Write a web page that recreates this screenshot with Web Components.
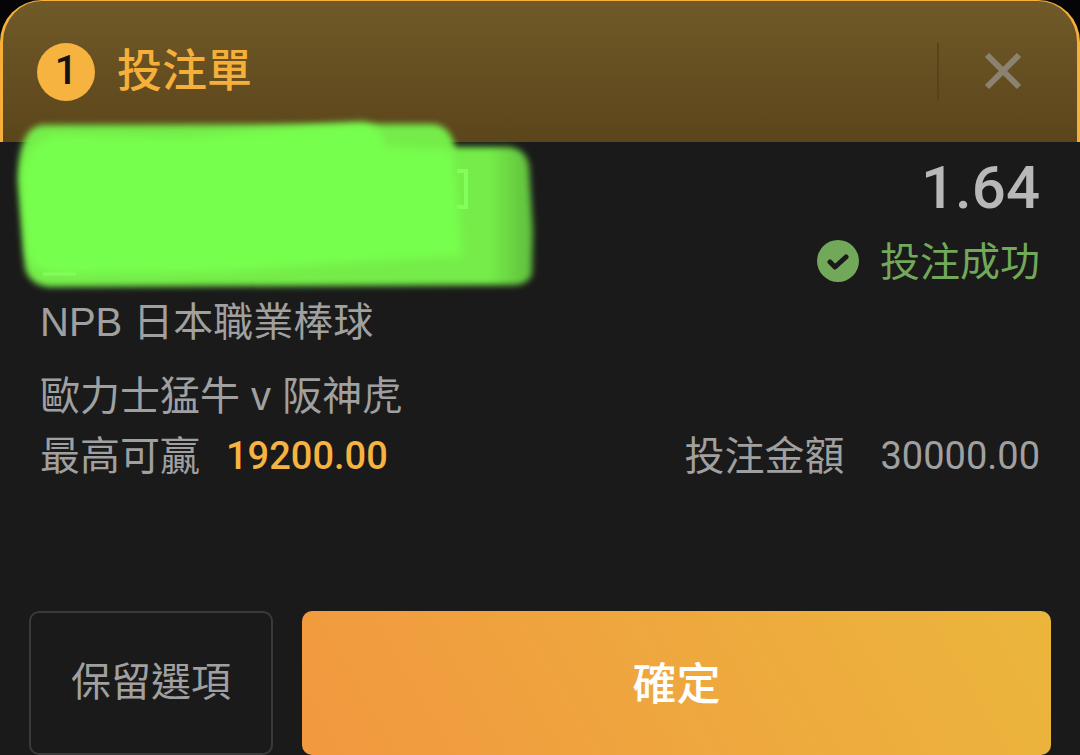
<!DOCTYPE html>
<html lang="zh-Hant">
<head>
<meta charset="utf-8">
<meta name="viewport" content="width=device-width, initial-scale=1">
<title>投注單</title>
<style>
  html, body {
    margin: 0;
    min-height: 100%;
    background: #050507;
  }
  body {
    font-family: "Liberation Sans", "Noto Sans CJK TC", sans-serif;
    color: #a0a0a0;
  }
</style>
</head>
<body>
<bet-slip>
  <slip-header slot="header" count="1">投注單</slip-header>
  <bet-item odds="1.64" status="投注成功">
    <span slot="league">NPB 日本職業棒球</span>
    <span slot="match">歐力士猛牛 v 阪神虎</span>
    <bet-amount slot="amounts" value="19200.00" highlight>最高可贏</bet-amount>
    <bet-amount slot="amounts" value="30000.00" wide>投注金額</bet-amount>
  </bet-item>
  <slip-button slot="actions">保留選項</slip-button>
  <slip-button slot="actions" primary>確定</slip-button>
</bet-slip>

<script>
function attach(el, html) {
  const template = document.createElement('template');
  template.innerHTML = html;
  el.attachShadow({ mode: 'open' }).appendChild(template.content.cloneNode(true));
}

class BetSlip extends HTMLElement {
  constructor() {
    super();
    attach(this, `
      <style>
        :host {
          display: flex;
          flex-direction: column;
          min-height: 100vh;
        }
        main {
          flex: 1;
          display: flex;
          flex-direction: column;
          justify-content: space-between;
          background: #1a1a1a;
        }
        footer {
          display: flex;
          gap: 29px;
          padding: 0 29px;
        }
      </style>
      <slot name="header"></slot>
      <main>
        <slot></slot>
        <footer><slot name="actions"></slot></footer>
      </main>
    `);
  }
}

class SlipHeader extends HTMLElement {
  constructor() {
    super();
    attach(this, `
      <style>
        :host { display: block; }
        header {
          display: flex;
          align-items: center;
          box-sizing: border-box;
          height: 142px;
          padding: 0 55px 0 34px;
          border: 3px solid #f6b03a;
          border-top-width: 1px;
          border-bottom: 0;
          border-radius: 42px 42px 0 0;
          background: linear-gradient(#705a28, #5b451b);
        }
        .count {
          display: flex;
          justify-content: center;
          width: 58px;
          height: 58px;
          border-radius: 50%;
          background: #f6b340;
          color: #141414;
          font: 500 40px/56px Roboto, sans-serif;
        }
        h1 {
          flex: 1;
          margin: 0 0 0 22px;
          color: #f6b03a;
          font: 500 45px/58px "Noto Sans CJK TC", sans-serif;
          padding-bottom: 8px;
        }
        button {
          display: flex;
          align-items: center;
          justify-content: flex-end;
          width: 85px;
          height: 58px;
          padding: 0;
          border: 0;
          border-left: 2px solid #57431c;
          background: none;
        }
      </style>
      <header>
        <span class="count"></span>
        <h1><slot></slot></h1>
        <button type="button" aria-label="關閉">
          <svg width="38" height="38" viewBox="0 0 38 38" stroke="#8b8272" stroke-width="6">
            <path d="M3 2L35 34M35 2L3 34"/>
          </svg>
        </button>
      </header>
    `);
  }

  connectedCallback() {
    this.shadowRoot.querySelector('.count').textContent = this.getAttribute('count') || '';
  }
}

class BetItem extends HTMLElement {
  constructor() {
    super();
    attach(this, `
      <style>
        :host {
          display: block;
          position: relative;
          padding: 8px 40px 0;
          font-size: 40px;
          line-height: 60px;
        }
        .result {
          display: flex;
          flex-direction: column;
          align-items: flex-end;
          gap: 6px;
        }
        .odds {
          color: #b8b8b8;
          font: 500 60px/76px Roboto, sans-serif;
        }
        .status {
          display: flex;
          align-items: center;
          gap: 20px;
          color: #72a85a;
        }
        .league { margin-bottom: 14px; }
        .amounts {
          display: flex;
          justify-content: space-between;
        }
        .marker {
          position: absolute;
          left: 0;
          top: -32px;
          pointer-events: none;
        }
      </style>
      <div class="result">
        <span class="odds"></span>
        <div class="status">
          <svg width="44" height="44" viewBox="0 0 44 44">
            <circle cx="22" cy="21" r="21" fill="#72a85a"/>
            <path d="M14 22L19 27L30 17" fill="none" stroke="#1a1a1a" stroke-width="5" stroke-linecap="round" stroke-linejoin="round"/>
          </svg>
          <span class="label"></span>
        </div>
      </div>
      <div class="league"><slot name="league"></slot></div>
      <div><slot name="match"></slot></div>
      <div class="amounts"><slot name="amounts"></slot></div>
      <!-- highlighter strokes over the selection name -->
      <svg class="marker" width="560" height="190" viewBox="0 110 560 190" aria-hidden="true">
        <defs>
          <filter id="edge" x="-10%" y="-10%" width="120%" height="120%"><feGaussianBlur stdDeviation="3"/></filter>
          <filter id="soft" x="-10%" y="-10%" width="120%" height="120%"><feGaussianBlur stdDeviation="4"/></filter>
          <linearGradient id="tail" gradientUnits="userSpaceOnUse" x1="490" y1="0" x2="534" y2="0">
            <stop offset="0" stop-color="#74ec48"/>
            <stop offset="1" stop-color="#5fbb3d"/>
          </linearGradient>
        </defs>
        <g filter="url(#edge)">
          <path d="M42 125L432 124Q450 125 455 147L508 147Q525 148 529 165L533 230L532 274Q530 283 516 285L48 287Q29 284 25 268L18 180Q18 128 42 125Z" fill="url(#tail)"/>
        </g>
        <path d="M60 135L180 138L362 123Q380 126 386 147L452 150Q457 190 462 256Q350 262 222 272L60 274Q32 272 27 252L22 180Q24 138 60 135Z" fill="#77ff4d" filter="url(#soft)"/>
        <path d="M43 274H76" stroke="#8bff66" stroke-width="3" opacity=".7"/>
        <path d="M457 171H466V207H457" fill="none" stroke="#82ff5b" stroke-width="4"/>
      </svg>
    `);
  }

  connectedCallback() {
    this.shadowRoot.querySelector('.odds').textContent = this.getAttribute('odds') || '';
    this.shadowRoot.querySelector('.label').textContent = this.getAttribute('status') || '';
  }
}

class BetAmount extends HTMLElement {
  constructor() {
    super();
    attach(this, `
      <style>
        :host {
          display: flex;
          gap: 26px;
        }
        :host([wide]) { gap: 36px; }
        .value { font: 400 38px/60px Roboto, sans-serif; }
        :host([highlight]) .value {
          color: #f6b340;
          font-weight: 500;
        }
      </style>
      <slot></slot>
      <span class="value"></span>
    `);
  }

  connectedCallback() {
    this.shadowRoot.querySelector('.value').textContent = this.getAttribute('value') || '';
  }
}

class SlipButton extends HTMLElement {
  constructor() {
    super();
    attach(this, `
      <style>
        :host { display: block; flex: 0 0 244px; }
        :host([primary]) { flex: 1; }
        button {
          box-sizing: border-box;
          width: 100%;
          height: 144px;
          padding: 0 0 8px;
          border: 2px solid #3a3a3a;
          border-radius: 10px;
          background: none;
          color: #a0a0a0;
          font: 400 40px/60px "Noto Sans CJK TC", sans-serif;
        }
        :host([primary]) button {
          padding-bottom: 4px;
          border: 0;
          background: linear-gradient(60deg, #f29840, #ebb63c);
          color: #fff;
          font-size: 44px;
          font-weight: 500;
        }
      </style>
      <button type="button"><slot></slot></button>
    `);
  }
}

customElements.define('bet-slip', BetSlip);
customElements.define('slip-header', SlipHeader);
customElements.define('bet-item', BetItem);
customElements.define('bet-amount', BetAmount);
customElements.define('slip-button', SlipButton);
</script>
</body>
</html>
